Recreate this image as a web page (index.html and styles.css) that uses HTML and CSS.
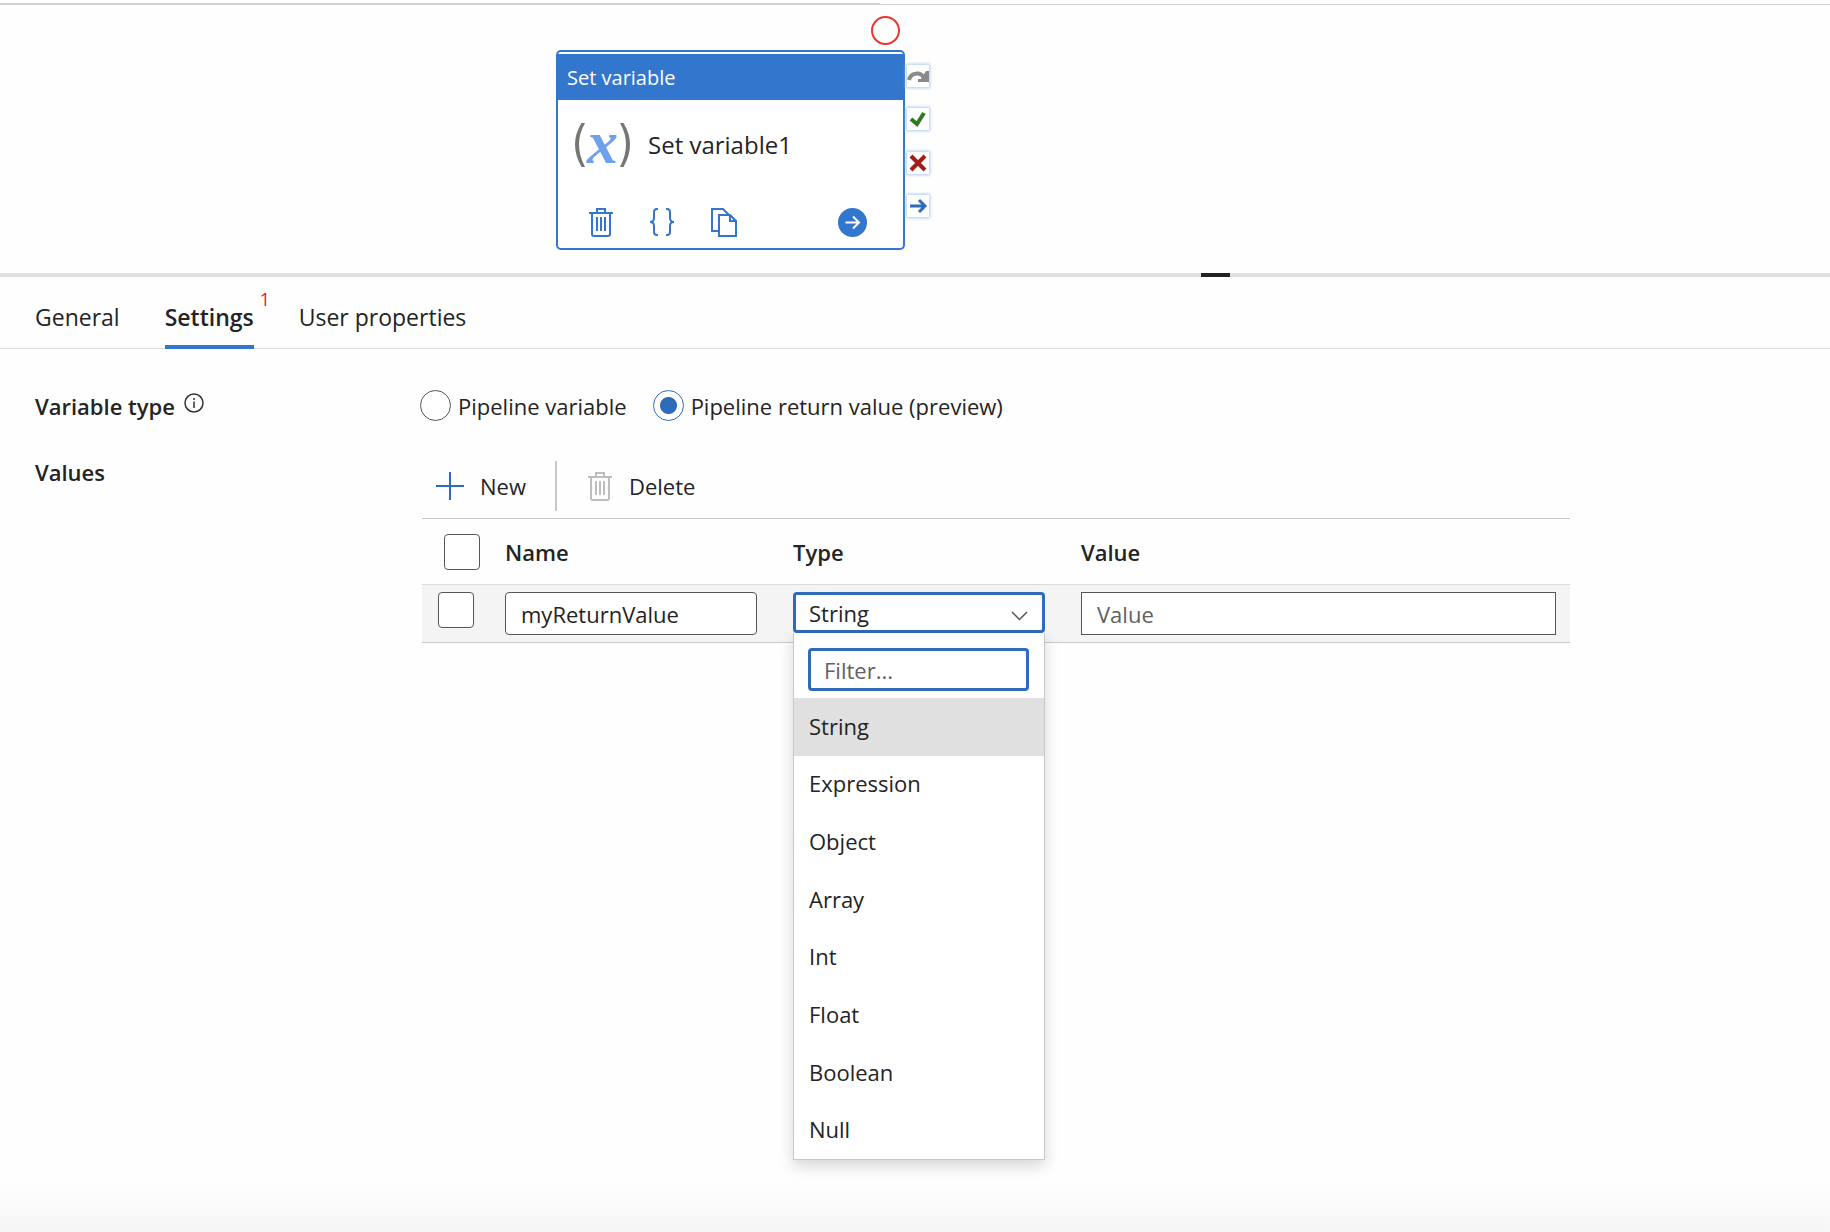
FILE: index.html
```html
<!DOCTYPE html>
<html lang="en">
<head>
<meta charset="utf-8">
<meta name="viewport" content="width=device-width, initial-scale=1">
<title>Set variable1</title>
<link rel="stylesheet" href="styles.css">
</head>
<body>
<svg class="sprite" aria-hidden="true">
  <symbol id="trash" viewBox="0 0 24 29">
    <g fill="none" stroke="currentColor" stroke-width="2">
      <path d="M0 5h24M8 5V1h8v4M3 5v21q0 2 2 2h14q2 0 2-2V5"/>
      <path d="M8 9v14M12 9v14M16 9v14"/>
    </g>
  </symbol>
</svg>
<section class="canvas" aria-label="Pipeline canvas">
  <div class="canvas-edge"></div>
  <span class="breakpoint"></span>
  <article class="node">
    <header class="node-head">Set variable</header>
    <div class="node-body">
      <div class="var-icon" aria-hidden="true">
        <svg width="10" height="46" viewBox="0 0 10 46"><path fill="#767676" d="M6.500 1H10Q-2 22 10 45H6.500Q-6.500 22 6.500 1z"/></svg>
        <span class="var-x">x</span>
        <svg width="10" height="46" viewBox="0 0 10 46"><path fill="#767676" d="M3.500 1H0Q12 22 0 45h3.500Q16.500 22 3.500 1z"/></svg>
      </div>
      <span class="node-name">Set variable1</span>
    </div>
    <footer class="node-tools">
      <button class="icon-btn" type="button" aria-label="Delete"><svg width="24" height="29"><use href="#trash"/></svg></button>
      <button class="icon-btn" type="button" aria-label="Code"><svg width="26" height="29" viewBox="0 0 26 29" fill="none" stroke="currentColor" stroke-width="2"><path d="M9 1H8Q5 1 5 4v6q0 4-4 4 4 0 4 4v6q0 3 3 3h1M17 1h1q3 0 3 3v6q0 4 4 4-4 0-4 4v6q0 3-3 3h-1"/></svg></button>
      <button class="icon-btn" type="button" aria-label="Clone"><svg width="26" height="29" viewBox="0 0 26 29" fill="none" stroke="currentColor" stroke-width="2"><path d="M8 23H1V1h11l6 6M8 7h11l6 6v15H8zM19 7v6h6"/></svg></button>
      <button class="icon-btn add-output" type="button" aria-label="Add output"><svg width="29" height="29" viewBox="0 0 29 29" fill="none" stroke="#fff" stroke-width="2"><circle cx="14.500" cy="14.500" r="14.500" fill="currentColor" stroke="none"/><path d="M7.500 14.500h13M15 8.500l6 6-6 6"/></svg></button>
    </footer>
    <div class="outputs">
      <span class="port"><svg viewBox="0 0 22 22"><path fill="none" stroke="#8a8a8a" stroke-width="4" d="M2 15a8 8 0 0 1 15-2"/><path fill="#8a8a8a" d="M22 6v11H11v-3h3l5-8z"/></svg></span>
      <span class="port"><svg viewBox="0 0 22 22" fill="none" stroke="#317a23" stroke-width="4"><path d="M4 11l6 5 7-11"/></svg></span>
      <span class="port"><svg viewBox="0 0 22 22" fill="none" stroke="#a11d17" stroke-width="4"><path d="M4 4l14 14M18 4L4 18"/></svg></span>
      <span class="port"><svg viewBox="0 0 22 22" fill="none" stroke="#2f6bbb" stroke-width="3"><path d="M3 11h15M12 5l6 6-6 6"/></svg></span>
    </div>
  </article>
</section>
<div class="splitter"><span class="splitter-grip"></span></div>
<nav class="tabs">
  <a class="tab" href="#general">General</a>
  <a class="tab active" href="#settings">Settings<span class="tab-count">1</span></a>
  <a class="tab" href="#user">User properties</a>
</nav>
<main class="settings">
  <div class="label-cell">Variable type
    <svg class="info" viewBox="0 0 20 20" fill="none" stroke="#333"><circle cx="10" cy="10" r="9" stroke-width="1.500"/><path stroke-width="1.500" d="M10 8.500V15M10 5v2"/></svg>
  </div>
  <div class="radios" role="radiogroup" aria-label="Variable type">
    <label class="radio"><input type="radio" name="kind">Pipeline variable</label>
    <label class="radio"><input type="radio" name="kind" checked>Pipeline return value (preview)</label>
  </div>
  <div class="label-cell values-label">Values</div>
  <div class="values">
    <div class="toolbar">
      <button class="tool" type="button"><svg class="plus" width="28" height="28" viewBox="0 0 28 28" fill="none" stroke="currentColor" stroke-width="2"><path d="M14 0v28M0 14h28"/></svg>New</button>
      <button class="tool delete" type="button"><svg class="muted" width="24" height="29"><use href="#trash"/></svg>Delete</button>
    </div>
    <table class="grid">
      <colgroup><col class="col-check"><col class="col-field"><col class="col-field"><col></colgroup>
      <thead>
        <tr><th class="check-head"><input type="checkbox" aria-label="Select all"></th><th>Name</th><th>Type</th><th>Value</th></tr>
      </thead>
      <tbody>
        <tr>
          <td class="check-cell"><input type="checkbox" aria-label="Select row"></td>
          <td><input class="field" type="text" value="myReturnValue" aria-label="Name"></td>
          <td>
            <div class="combo">
              <select class="combo-value" aria-label="Type">
                <option>String</option><option>Expression</option><option>Object</option><option>Array</option><option>Int</option><option>Float</option><option>Boolean</option><option>Null</option>
              </select>
              <svg class="chevron" viewBox="0 0 17 10" fill="none" stroke="#555" stroke-width="1.500"><path d="M1 1l7.500 7.500L16 1"/></svg>
              <div class="menu">
                <input class="filter" type="text" placeholder="Filter..." aria-label="Filter">
                <ul class="options" role="listbox">
                  <li class="option selected" role="option" aria-selected="true">String</li>
                  <li class="option" role="option">Expression</li>
                  <li class="option" role="option">Object</li>
                  <li class="option" role="option">Array</li>
                  <li class="option" role="option">Int</li>
                  <li class="option" role="option">Float</li>
                  <li class="option" role="option">Boolean</li>
                  <li class="option" role="option">Null</li>
                </ul>
              </div>
            </div>
          </td>
          <td class="value-cell"><input class="field square" type="text" placeholder="Value" aria-label="Value"></td>
        </tr>
      </tbody>
    </table>
  </div>
</main>
</body>
</html>
```
FILE: styles.css
```css
:root {
  --blue: #3376cd;
  --focus: #2f6bbb;
  --text: #242424;
}

* { box-sizing: border-box; }

body {
  margin: 0;
  min-height: 100vh;
  background: linear-gradient(to top, #f6f6f6, #fefefe 52px);
  color: var(--text);
  font: 22px/32px "Open Sans", "Noto Sans", sans-serif;
}

button, input, select { font: inherit; color: inherit; }
svg { display: block; }
.sprite { position: absolute; width: 0; height: 0; }

/* Canvas */
.canvas {
  position: relative;
  height: 273px;
  padding-top: 3px;
}
.canvas-edge {
  height: 2px;
  background: linear-gradient(#d0d0d0, #d0d0d0) left / 880px 2px no-repeat,
              linear-gradient(#d0d0d0, #d0d0d0) bottom / 100% 1px no-repeat;
}
.breakpoint {
  position: absolute;
  left: 871px;
  top: 16px;
  width: 29px;
  height: 29px;
  border: 2px solid #e8382d;
  border-radius: 50%;
}
.node {
  position: absolute;
  left: 556px;
  top: 50px;
  width: 349px;
  height: 200px;
  display: flex;
  flex-direction: column;
  padding-top: 2px;
  border: 2px solid var(--blue);
  border-radius: 5px;
  background: #fff;
}
.node-head {
  height: 46px;
  padding: 0 9px;
  background: var(--blue);
  color: #fff;
  font-size: 20px;
  line-height: 48px;
}
.node-body {
  display: flex;
  align-items: center;
  gap: 18px;
  height: 90px;
  padding-left: 17px;
  font-size: 24px;
}
.var-icon { display: flex; gap: 2px; width: 55px; height: 46px; }
.var-x {
  width: 31px;
  color: #6fa0ee;
  font: italic bold 62px/40px "Liberation Serif", serif;
}
.node-tools {
  display: flex;
  align-items: center;
  gap: 36px;
  padding: 18px 36px 0 31px;
}
.icon-btn { padding: 0; border: 0; background: none; color: var(--blue); }
.add-output { margin-left: auto; }
.outputs {
  position: absolute;
  left: 349px;
  top: 13px;
  height: 152px;
  display: flex;
  flex-direction: column;
  justify-content: space-between;
}
.port {
  width: 22px;
  height: 22px;
  background: #fff;
  box-shadow: 0 0 3px 1px #a9caf2;
}

.splitter {
  display: flex;
  justify-content: flex-end;
  height: 4px;
  padding-right: 600px;
  background: #e0e0e0;
}
.splitter-grip { width: 29px; background: #222; }

/* Tabs */
.tabs {
  display: flex;
  gap: 45px;
  height: 72px;
  padding: 24px 35px 0;
  border-bottom: 1px solid #dcdcdc;
  font-size: 23px;
}
.tab {
  position: relative;
  height: 48px;
  color: inherit;
  text-decoration: none;
}
.tab.active { border-bottom: 4px solid var(--blue); font-weight: 600; }
.tab-count {
  position: absolute;
  left: 100%;
  top: -18px;
  padding-left: 6px;
  color: #c9252d;
  font-size: 18px;
  font-weight: 400;
}

/* Settings form */
.settings {
  display: grid;
  grid-template-columns: 385px 1fr;
  padding: 41px 260px 0 35px;
}
.label-cell { display: flex; gap: 9px; font-weight: 600; }
.info { width: 20px; height: 20px; margin-top: 3px; }
.radios { display: flex; gap: 26px; height: 66px; }
.radio { display: flex; gap: 7px; height: 32px; }
.radio input {
  appearance: none;
  width: 31px;
  height: 31px;
  margin: 0;
  border: 1px solid #555;
  border-radius: 50%;
  background: #fff;
}
.radio input:checked {
  border-color: var(--focus);
  background: radial-gradient(circle, var(--focus) 8px, #fff 9px);
}

.values { padding-left: 2px; }
.toolbar { display: flex; height: 62px; padding: 5px 0 7px 14px; }
.tool {
  display: flex;
  align-items: center;
  gap: 16px;
  padding: 0;
  border: 0;
  background: none;
}
.plus { color: var(--focus); }
.muted { color: #bdbdbd; }
.delete { gap: 17px; margin-left: 29px; padding-left: 31px; border-left: 2px solid #c8c8c8; }

.grid {
  width: 100%;
  table-layout: fixed;
  border-collapse: separate;
  border-spacing: 0;
  border-top: 1px solid #c8c8c8;
}
.col-check { width: 83px; }
.col-field { width: 288px; }
.grid th {
  height: 66px;
  padding: 0;
  border-bottom: 1px solid #dcdcdc;
  font-weight: 600;
  text-align: left;
}
.grid td {
  height: 58px;
  padding: 7px 36px 7px 0;
  border-bottom: 1px solid #c8c8c8;
  background: #f4f4f4;
  vertical-align: top;
}
.grid th.check-head { padding-left: 22px; }
.grid td.check-cell { padding-left: 16px; }
.grid td.value-cell { padding-right: 14px; }
.grid input[type="checkbox"] {
  appearance: none;
  display: block;
  width: 36px;
  height: 36px;
  margin: 0;
  border: 1px solid #555;
  border-radius: 4px;
  background: #fff;
}
.field, .filter {
  display: block;
  width: 100%;
  height: 43px;
  padding: 0 15px;
  border: 1px solid #555;
  border-radius: 4px;
  background: #fff;
}
.square { border-radius: 0; }
::placeholder { color: #616161; opacity: 1; }

/* Type drop-down */
.combo { position: relative; }
.combo-value {
  appearance: none;
  display: block;
  width: 100%;
  height: 41px;
  padding: 0 13px;
  border: 3px solid var(--focus);
  border-radius: 4px;
  background: #fff;
}
.chevron { position: absolute; right: 17px; top: 19px; width: 17px; height: 10px; }
.menu {
  position: absolute;
  left: 0;
  right: 0;
  top: 100%;
  display: flex;
  flex-direction: column;
  padding-top: 15px;
  border: 1px solid #c8c8c8;
  border-top: 0;
  background: #fff;
  box-shadow: 0 6px 14px rgba(0, 0, 0, 0.16);
}
.filter { width: auto; min-width: 0; margin: 0 15px 7px 14px; border: 3px solid var(--focus); padding: 0 13px; }
.options {
  display: grid;
  grid-auto-rows: 1fr;
  height: 461px;
  margin: 0;
  padding: 0;
  list-style: none;
}
.option { display: flex; align-items: center; padding: 0 15px 2px; }
.selected { background: #e0e0e0; }
```
